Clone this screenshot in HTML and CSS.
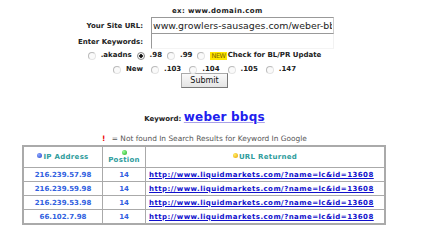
FILE: index.html
```html
<!DOCTYPE html>
<html lang="en">
<head>
    <meta charset="UTF-8">
    <title>Keyword Position Check</title>
    <link rel="stylesheet" href="styles.css">
</head>
<body>
    <div class="page">
        <form class="site-form">
            <div class="form-grid">
                <span></span>
                <p class="example">ex: www.domain.com</p>
                <label class="field-label" for="siteUrl">Your Site URL:</label>
                <input type="text" id="siteUrl" class="text-input" value="www.growlers-sausages.com/weber-bbqs">
                <label class="field-label" for="keyword">Enter Keywords:</label>
                <input type="text" id="keyword" class="text-input keyword-input">
            </div>

            <div class="radio-row first-row">
                <span class="option"><span class="radio"></span>.akadns</span>
                <span class="option"><span class="radio checked"></span>.98</span>
                <span class="option"><span class="radio"></span>.99</span>
                <span class="option"><span class="radio"></span><span class="new-badge">NEW</span>Check for BL/PR Update</span>
            </div>
            <div class="radio-row second-row">
                <span class="option"><span class="radio"></span>New</span>
                <span class="option"><span class="radio"></span>.103</span>
                <span class="option"><span class="radio"></span>.104</span>
                <span class="option"><span class="radio"></span>.105</span>
                <span class="option"><span class="radio"></span>.147</span>
            </div>
            <button type="button" class="submit-button">Submit</button>
        </form>

        <p class="keyword-line">Keyword: <a href="#" class="keyword-link">weber bbqs</a></p>

        <p class="legend"><span class="bang">!</span> = Not found In Search Results for Keyword In Google</p>

        <table class="results">
            <tr>
                <th class="col-ip"><span class="dot dot-blue"></span>IP Address</th>
                <th class="col-pos"><span class="dot dot-green dot-block"></span>Postion</th>
                <th class="col-url"><span class="dot dot-yellow"></span>URL Returned</th>
            </tr>
            <tr>
                <td class="ip">216.239.57.98</td>
                <td class="pos">14</td>
                <td class="url"><a href="#">http://www.liquidmarkets.com/?name=lc&amp;id=13608</a></td>
            </tr>
            <tr>
                <td class="ip">216.239.59.98</td>
                <td class="pos">14</td>
                <td class="url"><a href="#">http://www.liquidmarkets.com/?name=lc&amp;id=13608</a></td>
            </tr>
            <tr>
                <td class="ip">216.239.53.98</td>
                <td class="pos">14</td>
                <td class="url"><a href="#">http://www.liquidmarkets.com/?name=lc&amp;id=13608</a></td>
            </tr>
            <tr>
                <td class="ip">66.102.7.98</td>
                <td class="pos">14</td>
                <td class="url"><a href="#">http://www.liquidmarkets.com/?name=lc&amp;id=13608</a></td>
            </tr>
        </table>
    </div>
</body>
</html>
```

FILE: styles.css
```css
body {
    margin: 0;
    background-color: #fff;
    font-family: "DejaVu Sans", Verdana, sans-serif;
    font-size: 7px;
    color: #222;
}

.page {
    width: 409px;
    padding-top: 7px;
}

.form-grid {
    display: grid;
    grid-template-columns: 143px 183px;
    column-gap: 8px;
    align-items: center;
}

.example {
    margin: 0 0 1px 21px;
    font-weight: bold;
    line-height: 9px;
    letter-spacing: 0.35px;
}

.field-label {
    text-align: right;
    font-weight: bold;
}

.text-input {
    box-sizing: border-box;
    width: 183px;
    height: 17px;
    margin: 0;
    padding: 0 1px;
    border: 1px solid #999;
    border-right-color: #ccc;
    font-family: "DejaVu Sans", Verdana, sans-serif;
    font-size: 9.4px;
    color: #222;
    background: #fff;
    outline: none;
}

.keyword-input {
    height: 15px;
    border-top: none;
    border-right-color: #f2f2f2;
    border-bottom-color: #f4f4f4;
}

.radio-row {
    display: flex;
    justify-content: center;
    font-weight: bold;
    line-height: 11px;
}

.first-row {
    gap: 5px;
    margin-top: 1px;
}

.second-row {
    gap: 8px;
    margin-top: 3px;
}

.option {
    display: inline-flex;
    align-items: center;
}

.radio {
    box-sizing: border-box;
    width: 8px;
    height: 8px;
    margin-right: 5px;
    border-radius: 50%;
    border: 1px solid #bbb;
    border-right-color: #e4e4e4;
    border-bottom-color: #e4e4e4;
    background: #fafafa;
}

.radio.checked {
    border-color: #888;
    background: radial-gradient(circle, #111 0, #111 1.5px, #f4f4f4 2px);
}

.new-badge {
    margin-right: 1px;
    padding: 0 1px;
    background-color: #ffe600;
    color: #7a6500;
    font-size: 6.5px;
    line-height: 8px;
    letter-spacing: -0.4px;
    font-weight: normal;
}

.submit-button {
    display: block;
    margin: -2px auto 0;
    width: 47px;
    height: 15px;
    padding: 0;
    border: 1px solid #aaa;
    border-right-color: #777;
    border-bottom-color: #777;
    background: linear-gradient(#fafafa, #e4e4e4);
    font-family: "DejaVu Sans", Verdana, sans-serif;
    font-size: 8px;
    color: #111;
}

.keyword-line {
    margin: 22px 0 0;
    text-align: center;
    font-weight: bold;
    font-size: 7px;
}

.keyword-link {
    color: #2020ee;
    font-size: 12px;
    letter-spacing: 0.2px;
    text-decoration-color: #a9a0e8;
}

.legend {
    margin: 10px 0 2px;
    text-align: center;
    color: #555;
    font-size: 7.4px;
}

.bang {
    margin-right: 4px;
    color: #e00;
    font-weight: bold;
}

.results {
    margin-left: 22px;
    width: 364px;
    border-collapse: collapse;
    border: 2px solid #aaa;
}

.results th,
.results td {
    border: 1px solid #aaa;
    text-align: center;
    font-weight: bold;
    padding: 0;
    height: 13px;
}

.results th {
    height: 20px;
    color: #2e9c9c;
    letter-spacing: 0.3px;
}

.col-ip {
    width: 78px;
}

.col-pos {
    width: 42px;
}

.ip,
.pos {
    color: #3060e0;
}

.results td.url {
    text-align: left;
    padding-left: 3px;
}

.url a {
    color: #1010cc;
    letter-spacing: 0.45px;
}

.dot {
    display: inline-block;
    width: 5px;
    height: 5px;
    margin-right: 1px;
    border-radius: 50%;
    vertical-align: 1px;
}

.dot-block {
    display: block;
    margin: 0 auto 1px;
}

.dot-blue {
    background: radial-gradient(circle at 35% 35%, #8fa8ff, #2244cc);
}

.dot-green {
    background: radial-gradient(circle at 35% 35%, #9f9, #22aa22);
}

.dot-yellow {
    background: radial-gradient(circle at 35% 35%, #ffee66, #e8a000);
}
```
